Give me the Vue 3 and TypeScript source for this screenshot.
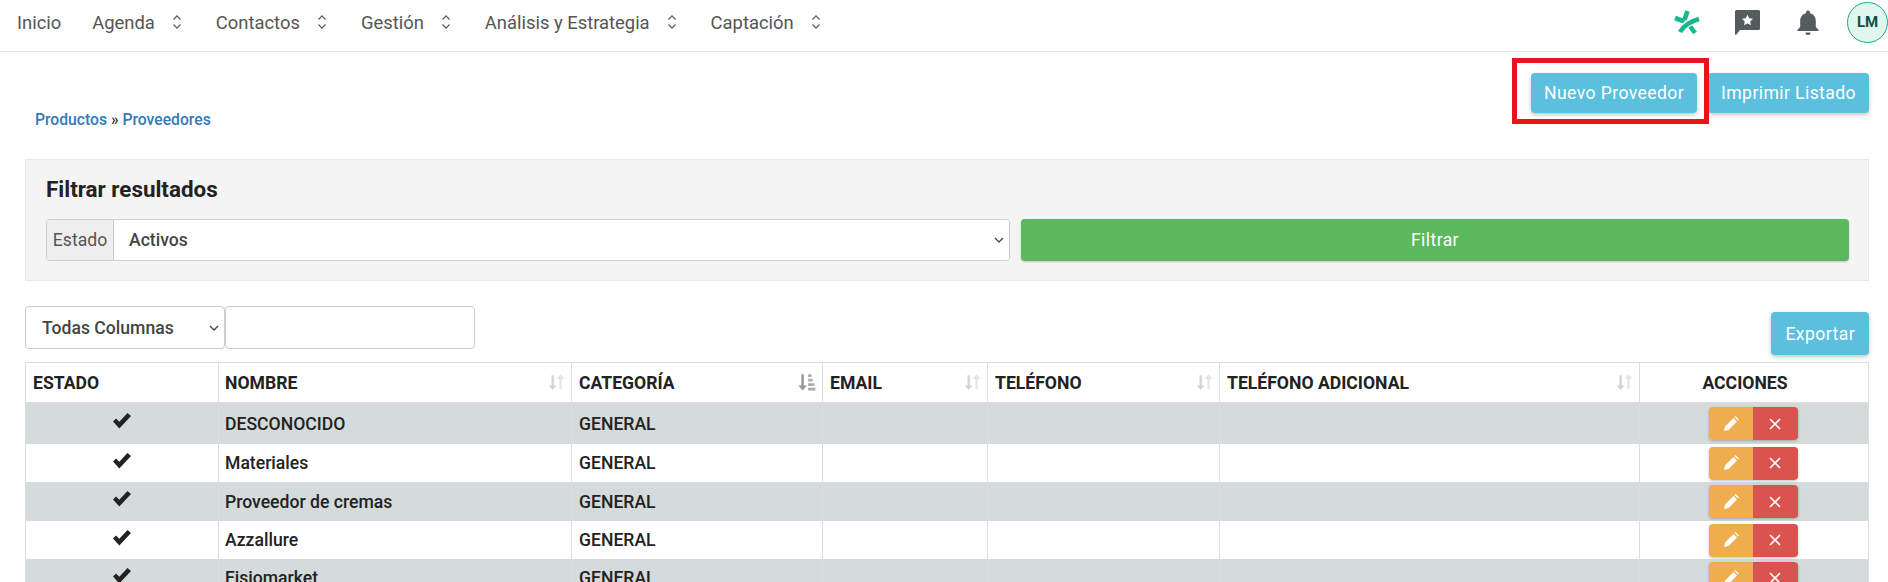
<script setup lang="ts">
interface Supplier {
  name: string
  category: string
}

const menu = [
  { label: 'Inicio', arrows: false },
  { label: 'Agenda', arrows: true },
  { label: 'Contactos', arrows: true },
  { label: 'Gestión', arrows: true },
  { label: 'Análisis y Estrategia', arrows: true },
  { label: 'Captación', arrows: true }
]

const columns = [
  { label: 'ESTADO', width: 193, sort: 'none' },
  { label: 'NOMBRE', width: 353, sort: 'idle' },
  { label: 'CATEGORÍA', width: 251, sort: 'active' },
  { label: 'EMAIL', width: 165, sort: 'idle' },
  { label: 'TELÉFONO', width: 232, sort: 'idle' },
  { label: 'TELÉFONO ADICIONAL', width: 420, sort: 'idle' },
  { label: 'ACCIONES', width: 229, sort: 'none' }
]

const suppliers: Supplier[] = [
  { name: 'DESCONOCIDO', category: 'GENERAL' },
  { name: 'Materiales', category: 'GENERAL' },
  { name: 'Proveedor de cremas', category: 'GENERAL' },
  { name: 'Azzallure', category: 'GENERAL' },
  { name: 'Fisiomarket', category: 'GENERAL' }
]
</script>

<template>
  <div class="page">
    <header class="topbar">
      <nav class="menu">
        <a v-for="item in menu" :key="item.label" class="menu-item">
          {{ item.label }}
          <svg v-if="item.arrows" class="updown" viewBox="0 0 10 16" width="10" height="16">
            <path d="M1.5 5.500 5 1.800l3.500 3.700M1.500 10.500 5 14.200l3.500-3.700" fill="none" stroke="#555" stroke-width="1.100" />
          </svg>
        </a>
      </nav>
      <div class="tools">
        <svg class="tool" viewBox="4 2 28 28" width="28" height="28" fill="none">
          <path d="M5 12l9.500 3.500M17.500 5l-3 9M20 20l5 7" stroke="#17b890" stroke-width="4.600" />
          <path d="M10 26Q15 17 29 13" stroke="#fff" stroke-width="7" />
          <path d="M10 26Q15 17 29 13" stroke="#17b890" stroke-width="4.600" />
        </svg>
        <svg class="tool bubble" viewBox="0 0 28 28" width="28" height="28">
          <path d="M2 3.500A1.500 1.500 0 0 1 3.500 2h22A1.500 1.500 0 0 1 27 3.500v17a1.500 1.500 0 0 1-1.500 1.500H7l-4 5-1-.5z" fill="#555c5c" />
          <path d="m14.500 6.800 1.700 3.500 3.800.5-2.800 2.600.7 3.800-3.400-1.900-3.400 1.900.7-3.800-2.800-2.600 3.800-.5z" fill="#fff" />
        </svg>
        <svg class="tool" viewBox="0 0 28 28" width="28" height="28">
          <path d="M14 2.500a2 2 0 0 1 2 2v.8c3.600.9 5.800 4 5.800 7.700v6l2.700 2.700v1.300h-21V21.700L6.200 19v-6c0-3.700 2.200-6.800 5.800-7.700v-.8a2 2 0 0 1 2-2zM11.500 24.500h5a2.500 2.500 0 0 1-5 0z" fill="#555c5c" />
        </svg>
        <div class="avatar">LM</div>
      </div>
    </header>

    <main class="content">
      <div class="head-row">
        <p class="crumbs"><a>Productos</a> » <a>Proveedores</a></p>
        <div class="head-actions">
          <span class="highlight"></span>
          <button class="btn btn-info">Nuevo Proveedor</button>
          <button class="btn btn-info">Imprimir Listado</button>
        </div>
      </div>

      <section class="filter">
        <h3>Filtrar resultados</h3>
        <div class="filter-row">
          <div class="input-group">
            <span class="addon">Estado</span>
            <div class="select-box">
              Activos
              <svg viewBox="0 0 10 6" width="10" height="6"><path d="M1 1l4 4 4-4" fill="none" stroke="#444" stroke-width="1.300" /></svg>
            </div>
          </div>
          <button class="btn btn-success">Filtrar</button>
        </div>
      </section>

      <div class="table-tools">
        <div class="search">
          <div class="select-box small">
            Todas Columnas
            <svg viewBox="0 0 10 6" width="10" height="6"><path d="M1 1l4 4 4-4" fill="none" stroke="#444" stroke-width="1.300" /></svg>
          </div>
          <div class="search-input"></div>
        </div>
        <button class="btn btn-info">Exportar</button>
      </div>

      <table class="grid">
        <colgroup>
          <col v-for="col in columns" :key="col.label" :style="{ width: col.width + 'px' }" />
        </colgroup>
        <thead>
          <tr>
            <th v-for="col in columns" :key="col.label" :class="{ center: col.label === 'ACCIONES' }">
              {{ col.label }}
              <svg v-if="col.sort === 'idle'" class="sort" viewBox="0 0 16 16" width="18" height="18">
                <path d="M4 2h2v9h2.500L5 15 1.500 11H4z" fill="#d0d3d4" />
                <path d="M11 14h2V5h2.500L12 1 8.500 5H11z" fill="#dfe5ea" />
              </svg>
              <svg v-if="col.sort === 'active'" class="sort" viewBox="0 0 16 16" width="18" height="18">
                <path d="M3 1h2.200v10H8l-3.900 4.500L.2 11H3z" fill="#999" />
                <path d="M9 1h3v2.500H9zM9 5h4v2.500H9zM9 9h5.500v2.500H9zM9 13h6.500v2.500H9z" fill="#aaa" />
              </svg>
            </th>
          </tr>
        </thead>
        <tbody>
          <tr v-for="row in suppliers" :key="row.name">
            <td class="center">
              <svg class="tick" viewBox="0 0 18 16" width="18" height="16">
                <path d="M0 8.500 3 5.500l3.300 3.300L14.500 0 18 3 6.300 15.500z" fill="#222" />
              </svg>
            </td>
            <td>{{ row.name }}</td>
            <td>{{ row.category }}</td>
            <td></td>
            <td></td>
            <td></td>
            <td class="center">
              <div class="btn-group">
                <span class="mini edit">
                  <svg viewBox="0 0 16 16" width="16" height="16">
                    <path d="M1 15l1-4.500L10.500 2 14 5.500 5.500 14zM11.500 1 12.500 0 16 3.500 15 4.500z" fill="#fff" />
                  </svg>
                </span>
                <span class="mini remove">
                  <svg viewBox="0 0 12 12" width="12" height="12">
                    <path d="M1 1l10 10M11 1 1 11" stroke="#fff" stroke-width="1.600" />
                  </svg>
                </span>
              </div>
            </td>
          </tr>
        </tbody>
      </table>
    </main>
  </div>
</template>

<style>
html, body {
  margin: 0;
  overflow: hidden;
  background: #fff;
}
</style>

<style scoped>
.page {
  height: 582px;
  overflow: hidden;
  font-family: Roboto, "Liberation Sans", sans-serif;
  color: #222;
}

.topbar {
  display: flex;
  justify-content: space-between;
  align-items: center;
  height: 52px;
  box-sizing: border-box;
  border-bottom: 1px solid #e7e7e7;
}

.menu {
  display: flex;
  padding-left: 17px;
  padding-bottom: 7px;
  gap: 31px;
  font-size: 18.4px;
  color: #555;
}

.menu-item {
  display: flex;
  align-items: center;
  gap: 17px;
}

.updown {
  margin-right: 3px;
}

.tools {
  display: flex;
  align-items: center;
  gap: 32px;
  margin-top: -7px;
}

.bubble {
  margin-left: -1px;
  margin-right: 1px;
}

.avatar {
  width: 39px;
  height: 39px;
  margin-left: -7px;
  border: 1px solid #1aa985;
  border-radius: 50%;
  background: #e0f7f0;
  color: #0d4f47;
  font-size: 15px;
  font-weight: 700;
  display: flex;
  align-items: center;
  justify-content: center;
}

.content {
  padding: 0 19px 0 25px;
}

.head-row {
  display: flex;
  justify-content: space-between;
  padding-top: 21px;
  height: 107px;
  box-sizing: border-box;
}

.crumbs {
  margin: 37px 0 0 10px;
  font-size: 15.7px;
  font-weight: 500;
  color: #333;
}

.crumbs a {
  color: #337ab7;
}

.head-actions {
  position: relative;
  display: flex;
  gap: 11px;
  height: 40px;
}

.highlight {
  position: absolute;
  left: -19px;
  top: -15px;
  width: 187px;
  height: 56px;
  border: 5px solid #e8141c;
}

.btn {
  border: 0;
  border-radius: 4px;
  font-family: inherit;
  font-size: 17.6px;
  color: #fff;
  letter-spacing: 0.4px;
  cursor: pointer;
}

.btn-info {
  background: #5bc0de;
  height: 40px;
  padding: 0 13px;
  box-shadow: 0 2px 4px rgba(0, 0, 0, 0.22);
}

.filter {
  height: 122px;
  box-sizing: border-box;
  background: #f4f4f4;
  border: 1px solid #e8e8e8;
  padding: 16px 19px 16px 20px;
}

.filter h3 {
  margin: 0 0 17px;
  font-size: 22.4px;
  font-weight: 700;
  line-height: 26px;
}

.filter-row {
  display: flex;
  gap: 11px;
}

.input-group {
  display: flex;
  width: 964px;
  height: 42px;
  box-sizing: border-box;
  border: 1px solid #ccc;
  border-radius: 4px;
  overflow: hidden;
}

.addon {
  width: 66px;
  display: flex;
  align-items: center;
  justify-content: center;
  background: #eee;
  border-right: 1px solid #ccc;
  font-size: 17.6px;
  color: #555;
}

.select-box {
  flex: 1;
  display: flex;
  align-items: center;
  justify-content: space-between;
  padding: 0 5px 0 15px;
  background: #fff;
  font-size: 17.6px;
  font-weight: 500;
  color: #444;
}

.select-box.small {
  flex: none;
  width: 200px;
  height: 43px;
  padding-left: 16px;
  box-sizing: border-box;
  border: 1px solid #ccc;
  border-radius: 4px;
}

.btn-success {
  flex: 1;
  height: 42px;
  background: #5cb85c;
  box-shadow: 0 1px 2px rgba(0, 0, 0, 0.2);
}

.table-tools {
  display: flex;
  justify-content: space-between;
  padding-top: 25px;
  height: 81px;
  box-sizing: border-box;
}

.search {
  display: flex;
}

.search-input {
  width: 250px;
  height: 43px;
  box-sizing: border-box;
  border: 1px solid #ccc;
  border-radius: 4px;
}

.table-tools .btn-info {
  height: 43px;
  margin-top: 6px;
  padding: 0 14px;
}

.grid {
  border-collapse: collapse;
  table-layout: fixed;
  width: 1843px;
  font-size: 17.6px;
}

.grid th,
.grid td {
  border: 1px solid #ddd;
  padding: 0 7px;
  text-align: left;
}

.grid th:nth-child(2),
.grid td:nth-child(2) {
  padding-left: 6px;
}

.grid th {
  position: relative;
  height: 39px;
  font-weight: 700;
}

.grid td {
  height: 38px;
  font-weight: 500;
  border-top: 0;
  border-bottom: 0;
}

.grid tbody tr:first-child td {
  height: 41px;
}

.grid tbody tr:nth-child(3) td {
  height: 39px;
}

.grid tbody tr:nth-child(odd) {
  background: #d5dada;
}

.grid .center {
  text-align: center;
}

.grid th.center {
  padding-right: 25px;
}

.grid td.center:last-child {
  padding: 0 9px 0 7px;
}

.sort {
  position: absolute;
  right: 6px;
  top: 10px;
}

.tick {
  display: block;
  margin: -5px auto 0;
}

.btn-group {
  display: inline-flex;
  vertical-align: middle;
  height: 33px;
  border-radius: 4px;
  overflow: hidden;
  box-shadow: 0 1px 3px rgba(0, 0, 0, 0.25);
}

.mini {
  width: 44px;
  display: flex;
  align-items: center;
  justify-content: center;
}

.edit {
  background: #f0ad4e;
}

.remove {
  background: #d9534f;
  width: 45px;
}
</style>
